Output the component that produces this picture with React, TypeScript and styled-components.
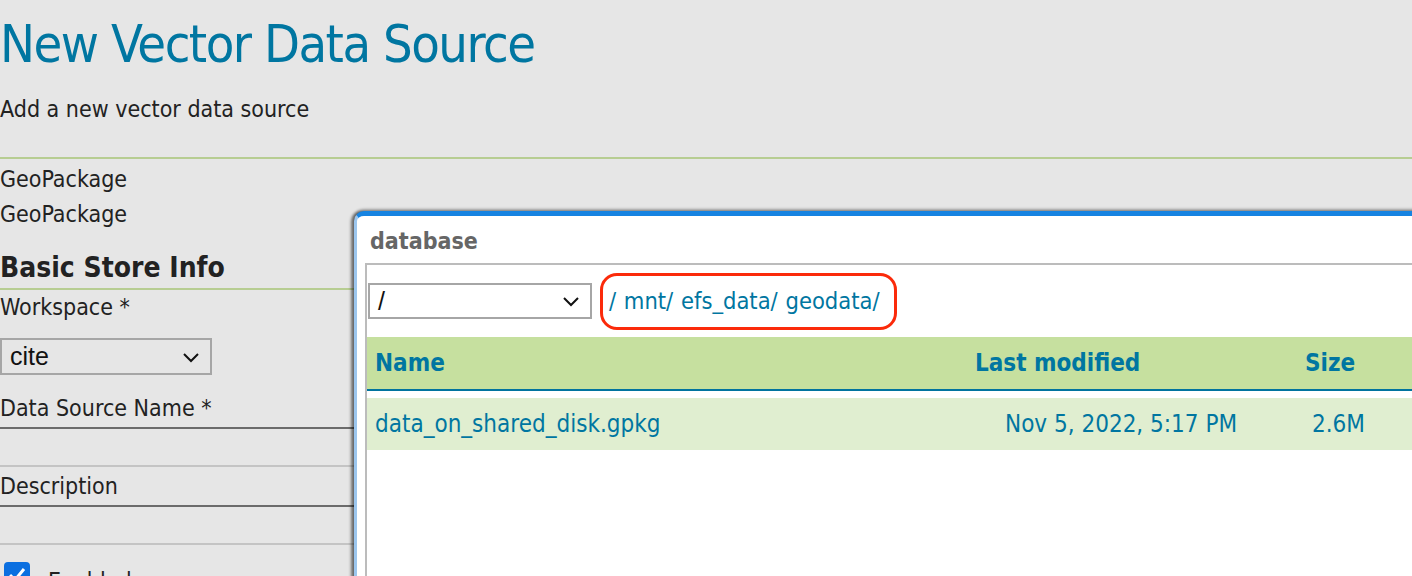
import styled, { createGlobalStyle } from 'styled-components';

const GlobalStyle = createGlobalStyle`
    html, body {
        margin: 0;
        padding: 0;
        background: #e6e6e6;
        overflow: hidden;
    }
    body {
        font-family: "DejaVu Sans", Verdana, sans-serif;
        font-stretch: condensed;
        color: #222;
    }
`;

const Page = styled.div`
    position: relative;
    width: 1412px;
    height: 576px;
    overflow: hidden;
`;

const Form = styled.div`
    width: 420px;
    display: flex;
    flex-direction: column;
    white-space: nowrap;
`;

const Title = styled.h1`
    margin: 0;
    padding-top: 12px;
    font-size: 52px;
    letter-spacing: -1.5px;
    font-weight: normal;
    line-height: 64px;
    color: #0076a1;
`;

const Subtitle = styled.p`
    margin: 20px 0 0;
    font-size: 23px;
    line-height: 26px;
`;

const Rule = styled.div<{ $top: number; $width?: string }>`
    margin-top: ${p => p.$top}px;
    height: 2px;
    width: ${p => p.$width || '1412px'};
    background: #b7cd92;
`;

const Line = styled.div<{ $top?: number }>`
    margin-top: ${p => p.$top ?? 0}px;
    font-size: 23px;
    line-height: 35px;
`;

const Heading = styled.h2`
    margin: 20px 0 0;
    font-size: 28px;
    line-height: 32px;
    font-weight: bold;
`;

const Label = styled.label<{ $top: number }>`
    display: block;
    font-size: 23px;
    line-height: 26px;
    margin-top: ${p => p.$top}px;
`;

const SelectBox = styled.div<{ $width: number; $height: number }>`
    display: flex;
    align-items: center;
    justify-content: space-between;
    box-sizing: border-box;
    width: ${p => p.$width}px;
    height: ${p => p.$height}px;
    border: 2px solid #a6a6a6;
    padding: 0 10px 0 8px;
    font-family: "Liberation Sans", Arial, sans-serif;
    font-size: 25px;
    color: #111;
`;

const SelectWrap = styled.div`
    margin-top: 18px;
`;

const Chevron = () => (
    <svg width="18" height="12" viewBox="0 0 18 12">
        <path d="M2 3 L9 10 L16 3" fill="none" stroke="#111" strokeWidth="2" />
    </svg>
);

const TextInput = styled.div`
    margin-top: 6px;
    box-sizing: border-box;
    height: 40px;
    width: 420px;
    border-top: 2px solid #6b6b6b;
    border-bottom: 2px solid #c4c4c4;
`;

const CheckRow = styled.div`
    margin-top: 17px;
    display: flex;
    align-items: flex-start;
    gap: 18px;
    font-size: 23px;
    line-height: 26px;
    padding-left: 4px;
`;

const CheckBox = styled.span`
    width: 26px;
    height: 26px;
    border-radius: 4px;
    background: #0b6fe0;
    display: flex;
    align-items: center;
    justify-content: center;
`;

const CheckLabel = styled.span`
    padding-top: 6px;
`;

const Window = styled.div`
    position: absolute;
    left: 354px;
    top: 211px;
    right: -20px;
    bottom: -20px;
    background: #fff;
    border-top: 5px solid #1683e1;
    border-left: 3px solid #9cc6ee;
    border-top-left-radius: 10px;
    box-shadow: -3px 0 3px rgba(0, 0, 0, 0.5), 0 -2px 3px rgba(0, 0, 0, 0.25);
    display: flex;
    flex-direction: column;
`;

const WindowTitle = styled.div`
    padding: 10px 0 0 13px;
    height: 37px;
    font-size: 23px;
    font-weight: bold;
    color: #666;
    line-height: 30px;
`;

const Panel = styled.div`
    margin-left: 8px;
    flex: 1;
    border-top: 2px solid #bcbcbc;
    border-left: 2px solid #bcbcbc;
    display: flex;
    flex-direction: column;
`;

const Toolbar = styled.div`
    display: flex;
    align-items: center;
    gap: 8px;
    height: 72px;
    padding-left: 1px;
`;

const Crumbs = styled.div`
    border: 3px solid #fb2a0a;
    border-radius: 17px;
    height: 57px;
    box-sizing: border-box;
    display: flex;
    align-items: center;
    padding: 0 14px 0 6px;
    font-size: 23.5px;
    color: #0076a1;
    word-spacing: 1px;
    white-space: nowrap;
`;

const Grid = styled.div<{ $bg: string }>`
    display: grid;
    grid-template-columns: 600px 330px 1fr;
    align-items: center;
    height: 52px;
    background: ${p => p.$bg};
    font-size: 24px;
    color: #0076a1;
`;

const HeadRow = styled(Grid)`
    font-weight: bold;
    border-bottom: 2px solid #00739e;
    margin-bottom: 7px;
`;

const Cell = styled.div<{ $pad: number }>`
    padding-left: ${p => p.$pad}px;
    white-space: nowrap;
`;

export default function App() {
    return (
        <Page>
            <GlobalStyle />
            <Form>
                <Title>New Vector Data Source</Title>
                <Subtitle>Add a new vector data source</Subtitle>
                <Rule $top={35} />
                <Line $top={3}>GeoPackage</Line>
                <Line>GeoPackage</Line>
                <Heading>Basic Store Info</Heading>
                <Rule $top={4} $width="420px" />
                <Label $top={4}>Workspace *</Label>
                <SelectWrap>
                    <SelectBox $width={212} $height={37}>
                        <span>cite</span>
                        <Chevron />
                    </SelectBox>
                </SelectWrap>
                <Label $top={20}>Data Source Name *</Label>
                <TextInput />
                <Label $top={6}>Description</Label>
                <TextInput />
                <CheckRow>
                    <CheckBox>
                        <svg width="18" height="16" viewBox="0 0 18 16">
                            <path d="M2 8 L7 13 L16 2" fill="none" stroke="#fff" strokeWidth="3" />
                        </svg>
                    </CheckBox>
                    <CheckLabel>Enabled</CheckLabel>
                </CheckRow>
            </Form>

            <Window>
                <WindowTitle>database</WindowTitle>
                <Panel>
                    <Toolbar>
                        <SelectBox $width={224} $height={36}>
                            <span>/</span>
                            <Chevron />
                        </SelectBox>
                        <Crumbs>/ mnt/ efs_data/ geodata/</Crumbs>
                    </Toolbar>
                    <HeadRow $bg="#c6e09f">
                        <Cell $pad={8}>Name</Cell>
                        <Cell $pad={8}>Last modified</Cell>
                        <Cell $pad={8}>Size</Cell>
                    </HeadRow>
                    <Grid $bg="#e0eed0">
                        <Cell $pad={8}>data_on_shared_disk.gpkg</Cell>
                        <Cell $pad={38}>Nov 5, 2022, 5:17 PM</Cell>
                        <Cell $pad={15}>2.6M</Cell>
                    </Grid>
                </Panel>
            </Window>
        </Page>
    );
}
